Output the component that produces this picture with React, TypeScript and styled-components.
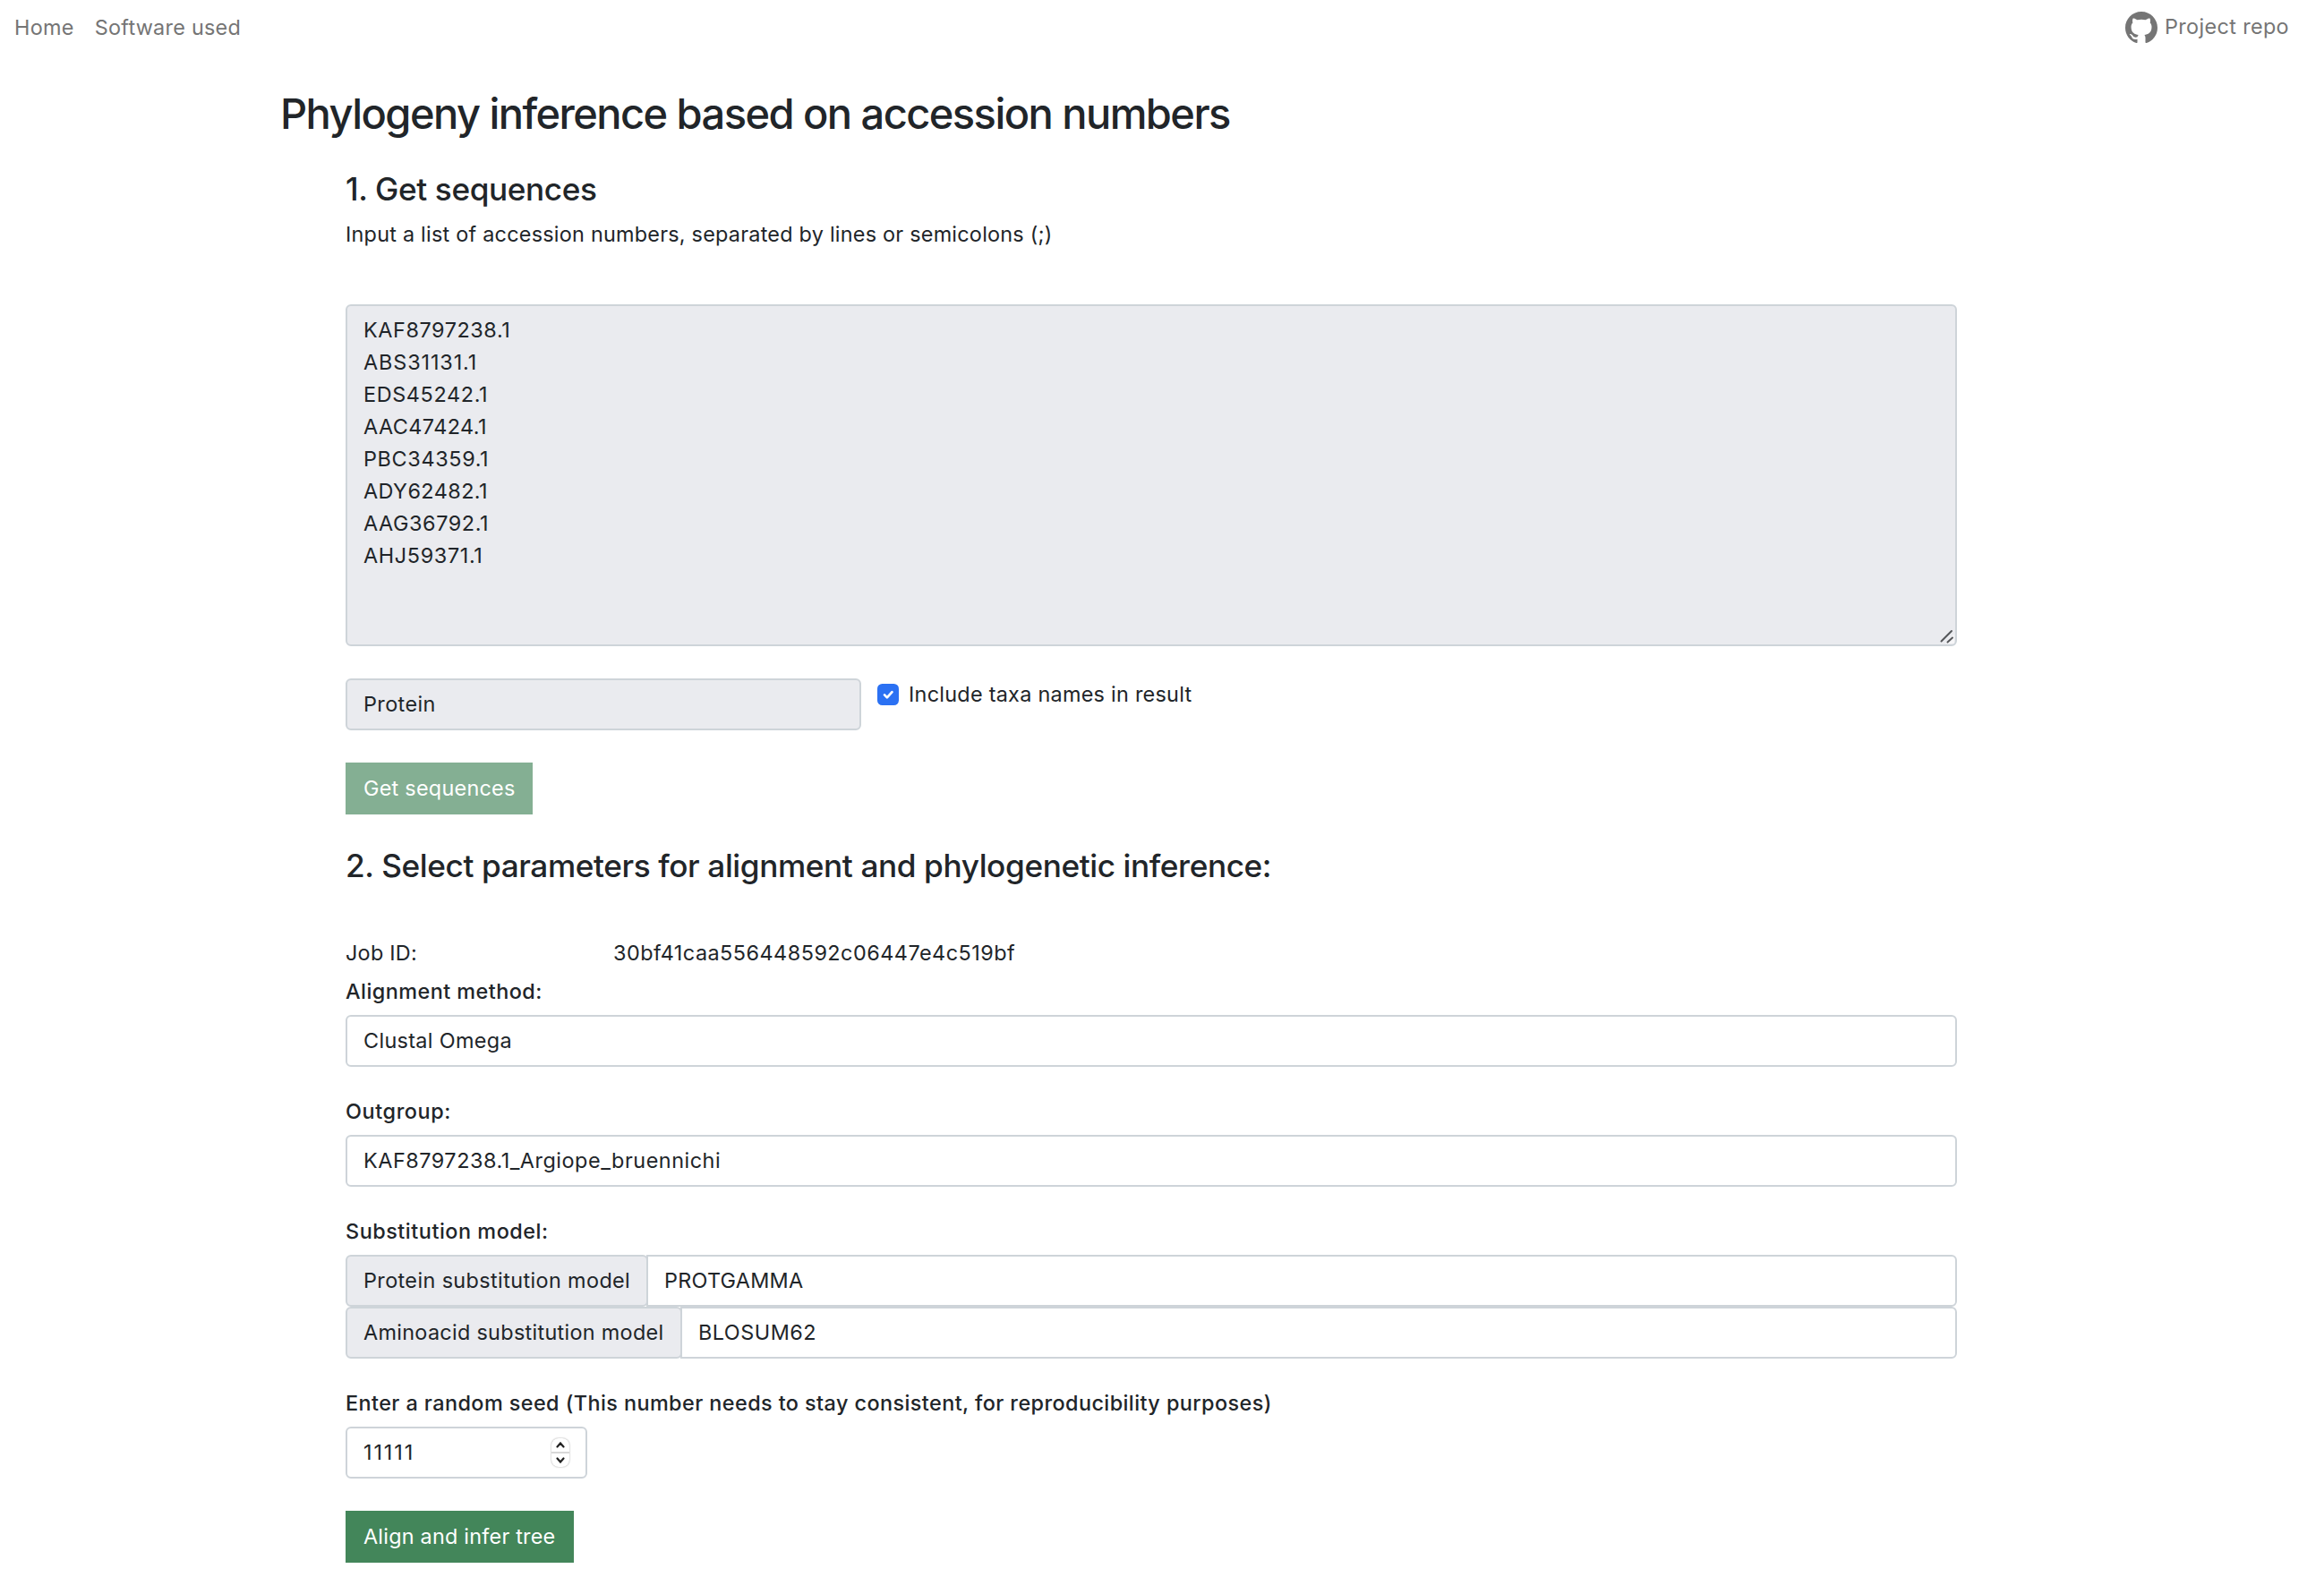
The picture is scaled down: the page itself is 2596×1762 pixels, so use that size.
import React from "react";
import styled, { createGlobalStyle } from "styled-components";
import { BsGithub } from "react-icons/bs";

const line = "#ced4d9";
const fill = "#eaebef";

const GlobalStyle = createGlobalStyle`
  *, *::before, *::after { box-sizing: border-box; }
  body {
    margin: 0;
    background: #fff;
    color: #212529;
    font-family: Inter, "Liberation Sans", sans-serif;
    font-size: 23.4px;
    line-height: 36px;
  }
  h2, h4, p { margin: 0; }
`;

type Tracked = { $track?: number };

const Text = styled.span<Tracked>`
  letter-spacing: ${(p) => p.$track ?? 0.4}px;
  white-space: pre;
`;

const Page = styled.div`
  height: 1762px;
  overflow: hidden;
`;

const Navbar = styled.nav`
  display: flex;
  justify-content: space-between;
  align-items: flex-start;
  height: 60px;
  padding: 13px 39px 0 16px;
  color: #757575;
`;

const NavLinks = styled.div`
  display: flex;
  gap: 23px;
`;

const RepoLink = styled.a`
  display: flex;
  gap: 8px;
  margin-top: -1px;

  svg {
    margin-top: 1px;
  }
`;

const Container = styled.main`
  padding: 38px 0 0 313px;
`;

const Title = styled.h2`
  font-size: 47px;
  font-weight: 500;
  line-height: 58px;
  letter-spacing: -1.554px;
`;

const Content = styled.div`
  display: flex;
  flex-direction: column;
  align-items: flex-start;
  width: 1800px;
  margin-left: 73px;
`;

const Heading = styled.h4<{ $top: number }>`
  margin-top: ${(p) => p.$top}px;
  font-size: 35.2px;
  font-weight: 500;
  line-height: 43px;
  letter-spacing: -0.4px;
`;

const Hint = styled.p`
  margin-top: 11px;
`;

const TextArea = styled.div`
  position: relative;
  display: flex;
  flex-direction: column;
  width: 100%;
  height: 382px;
  margin-top: 60px;
  padding: 9px 18px;
  border: 2px solid ${line};
  border-radius: 6px;
  background: ${fill};
`;

const ResizeGrip = styled.svg`
  position: absolute;
  right: 1px;
  bottom: 1px;
`;

const OptionsRow = styled.div`
  display: flex;
  align-items: flex-start;
  gap: 18px;
  margin-top: 36px;
`;

const Field = styled.div<{ $width?: string; $disabled?: boolean }>`
  display: flex;
  align-items: center;
  justify-content: space-between;
  width: ${(p) => p.$width ?? "100%"};
  height: 58px;
  padding: 0 18px;
  border: 2px solid ${line};
  border-radius: 6px;
  background: ${(p) => (p.$disabled ? fill : "#fff")};
`;

const CheckLabel = styled.label`
  display: flex;
  align-items: flex-start;
  gap: 11px;

  svg {
    margin-top: 6px;
  }
`;

const Button = styled.button<{ $disabled?: boolean }>`
  height: 58px;
  margin-top: 36px;
  padding: 0 20px;
  border: 0;
  background: ${(p) => (p.$disabled ? "#84af93" : "#43865a")};
  color: #fff;
  font: inherit;
  text-align: left;
`;

const SequencesButton = styled(Button)`
  width: 209px;
`;

const AlignButton = styled(Button)`
  width: 255px;
`;

const JobRow = styled.div`
  display: grid;
  grid-template-columns: 299px auto;
  margin-top: 58px;
`;

const Label = styled.label<{ $top?: number }>`
  margin-top: ${(p) => p.$top ?? 32}px;
  margin-bottom: 8px;
  font-weight: 500;
`;

const InputGroup = styled.div`
  display: flex;
  width: 100%;

  & > :last-child {
    flex: 1;
    border-top-left-radius: 0;
    border-bottom-left-radius: 0;
  }
`;

const Addon = styled(Field)`
  flex: none;
  margin-right: -2px;
`;

const Stepper = styled.span`
  display: flex;
  flex-direction: column;
  width: 20px;
  height: 32px;
  border-radius: 8px;
  background: #fff;
  box-shadow: 0 0 2px rgba(0, 0, 0, 0.4);
`;

const StepHalf = styled.span`
  display: flex;
  flex: 1;
  align-items: center;
  justify-content: center;

  & + & {
    border-top: 2px solid #d8d8d8;
  }
`;

const accessions: [string, number][] = [
  ["KAF8797238.1", 0.58],
  ["ABS31131.1", 0.9],
  ["EDS45242.1", 0.64],
  ["AAC47424.1", 0.451],
  ["PBC34359.1", 0.66],
  ["ADY62482.1", 0.436],
  ["AAG36792.1", 0.587],
  ["AHJ59371.1", 0.65],
];

export default function App() {
  return (
    <Page>
      <GlobalStyle />
      <Navbar>
        <NavLinks>
          <Text $track={0.3}>Home</Text>
          <Text $track={0.26}>Software used</Text>
        </NavLinks>
        <RepoLink>
          <BsGithub size={36} />
          <Text $track={0.36}>Project repo</Text>
        </RepoLink>
      </Navbar>
      <Container>
        <Title>Phylogeny inference based on accession numbers</Title>
        <Content>
          <Heading $top={34}>1. Get sequences</Heading>
          <Hint>
            <Text $track={0.24}>Input a list of accession numbers, separated by lines or semicolons (;)</Text>
          </Hint>
          <TextArea>
            {accessions.map(([id, track]) => (
              <Text key={id} $track={track}>{id}</Text>
            ))}
            <ResizeGrip width="16" height="16" viewBox="0 0 16 16">
              <path d="M5.5 16 16 5.5V16z" fill="#f6f6f8" />
              <path d="M1.5 13.5 13 2M8.5 14.5 14 9.5" stroke="#55575a" strokeWidth="2" fill="none" strokeLinecap="round" />
            </ResizeGrip>
          </TextArea>
          <OptionsRow>
            <Field $width="576px" $disabled>
              <Text $track={0.4}>Protein</Text>
            </Field>
            <CheckLabel>
              <svg width="24" height="24" viewBox="0 0 24 24">
                <rect width="24" height="24" rx="5.5" fill="#2b71f3" />
                <path d="m8 12.4 2.9 3 5.6-6.2" stroke="#fff" strokeWidth="2.7" fill="none" strokeLinecap="round" strokeLinejoin="round" />
              </svg>
              <Text $track={0.271}>Include taxa names in result</Text>
            </CheckLabel>
          </OptionsRow>
          <SequencesButton $disabled>
            <Text $track={0.257}>Get sequences</Text>
          </SequencesButton>

          <Heading $top={36}>2. Select parameters for alignment and phylogenetic inference:</Heading>
          <JobRow>
            <Text $track={0.26}>Job ID:</Text>
            <Text $track={0.486}>30bf41caa556448592c06447e4c519bf</Text>
          </JobRow>

          <Label $top={7}><Text $track={0.46}>Alignment method:</Text></Label>
          <Field><Text $track={0.33}>Clustal Omega</Text></Field>

          <Label><Text $track={0.6}>Outgroup:</Text></Label>
          <Field><Text $track={0.53}>KAF8797238.1_Argiope_bruennichi</Text></Field>

          <Label><Text $track={0.533}>Substitution model:</Text></Label>
          <InputGroup>
            <Addon $width="338px" $disabled><Text $track={0.39}>Protein substitution model</Text></Addon>
            <Field><Text $track={0.25}>PROTGAMMA</Text></Field>
          </InputGroup>
          <InputGroup>
            <Addon $width="376px" $disabled><Text $track={0.304}>Aminoacid substitution model</Text></Addon>
            <Field><Text $track={0.5}>BLOSUM62</Text></Field>
          </InputGroup>

          <Label><Text $track={0.427}>Enter a random seed (This number needs to stay consistent, for reproducibility purposes)</Text></Label>
          <Field $width="270px">
            <Text $track={1.9}>11111</Text>
            <Stepper>
              <StepHalf>
                <svg width="10" height="7" viewBox="0 0 10 7"><path d="m1.5 5.5 3.5-4 3.5 4" stroke="#222" strokeWidth="2.2" fill="none" strokeLinecap="round" /></svg>
              </StepHalf>
              <StepHalf>
                <svg width="10" height="7" viewBox="0 0 10 7"><path d="m1.5 1.5 3.5 4 3.5-4" stroke="#222" strokeWidth="2.2" fill="none" strokeLinecap="round" /></svg>
              </StepHalf>
            </Stepper>
          </Field>
          <AlignButton>
            <Text $track={0.23}>Align and infer tree</Text>
          </AlignButton>
        </Content>
      </Container>
    </Page>
  );
}
